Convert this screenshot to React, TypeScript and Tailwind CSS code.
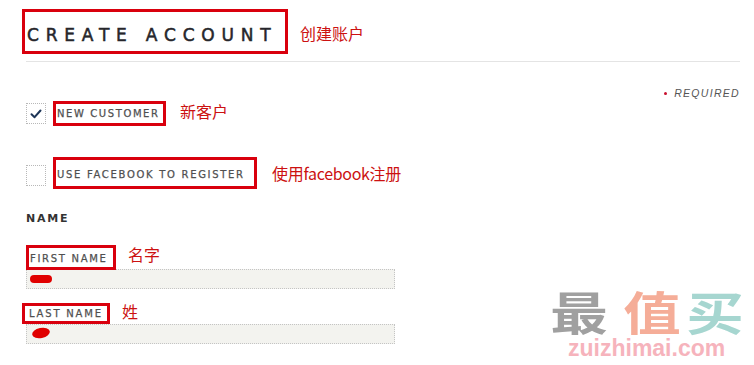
import React from "react";

const cjk = "font-['Noto_Sans_CJK_SC','Noto_Sans',sans-serif]";
const dj = "font-['DejaVu_Sans',Verdana,sans-serif]";

function Check({ checked }: { checked?: boolean }) {
  return (
    <div className="w-[20px] h-[21px] border border-dotted border-[#b8b8b8] flex items-center justify-center shrink-0">
      {checked && (
        <svg width="12" height="10" viewBox="0 0 12 10">
          <path d="M1.5 5.2 L4.6 8.2 L10.5 1.5" fill="none" stroke="#1d3557" strokeWidth="2" strokeLinecap="round" strokeLinejoin="round" />
        </svg>
      )}
    </div>
  );
}

export default function App() {
  return (
    <div className="relative w-[754px] h-[365px] bg-white overflow-hidden font-['Liberation_Sans',Arial,sans-serif]">
      {/* heading */}
      <div className="flex items-center pt-[9px] pl-[22px]">
        <div className="border-[3px] border-[#d9000d] w-[266px] h-[45px] pl-[2px] pt-[15px]">
          <h1 className={`${dj} text-[17px] leading-[17px] tracking-[6.8px] text-[#26262b] [-webkit-text-stroke:0.5px_#26262b] whitespace-nowrap`}>CREATE ACCOUNT</h1>
        </div>
        <span className={`${cjk} ml-[12px] mt-[2px] text-[16px] leading-[20px] text-[#cc1111]`}>创建账户</span>
      </div>
      <div className="ml-[26px] mr-[14px] mt-[7px] h-px bg-[#e4e4e4]" />

      {/* required */}
      <div className="flex justify-end items-center pr-[14px] mt-[26px] h-[10px]">
        <span className="w-[3px] h-[3px] rounded-full bg-[#c8102e] mr-[7px]" />
        <span className="text-[10.5px] leading-[10px] italic tracking-[1.3px] text-[#555]">REQUIRED</span>
      </div>

      {/* new customer */}
      <div className="flex items-center pl-[26px] mt-[3px]">
        <Check checked />
        <div className="ml-[7px] border-[3px] border-[#d9000d] w-[113px] h-[25px] pl-[1px] flex items-center">
          <span className={`${dj} text-[10px] leading-[10px] tracking-[1.6px] text-[#505050] [-webkit-text-stroke:0.25px_#505050] whitespace-nowrap`}>NEW CUSTOMER</span>
        </div>
        <span className={`${cjk} ml-[14px] -mt-[6px] text-[16px] leading-[20px] text-[#cc1111]`}>新客户</span>
      </div>

      {/* facebook */}
      <div className="flex items-center pl-[26px] mt-[31px]">
        <div className="mt-[4px]"><Check /></div>
        <div className="ml-[7px] border-[3px] border-[#d9000d] w-[204px] h-[32px] pl-[1px] pt-[4px] flex items-center">
          <span className={`${dj} text-[10px] leading-[10px] tracking-[1.7px] text-[#505050] [-webkit-text-stroke:0.25px_#505050] whitespace-nowrap`}>USE FACEBOOK TO REGISTER</span>
        </div>
        <span className={`${cjk} ml-[15px] text-[16px] leading-[20px] text-[#cc1111] tracking-[-0.3px]`}>使用facebook注册</span>
      </div>

      {/* name */}
      <div className={`${dj} pl-[26px] mt-[24px] text-[11px] leading-[12px] tracking-[1.8px] text-[#333] font-bold`}>NAME</div>

      <div className="flex items-center pl-[26px] mt-[20px]">
        <div className="border-[3px] border-[#d9000d] w-[90px] h-[25px] pl-[1px] pt-[3px] flex items-center">
          <span className={`${dj} text-[10px] leading-[10px] tracking-[1.7px] text-[#505050] [-webkit-text-stroke:0.25px_#505050] whitespace-nowrap`}>FIRST NAME</span>
        </div>
        <span className={`${cjk} ml-[12px] -mt-[8px] text-[16px] leading-[20px] text-[#cc1111]`}>名字</span>
      </div>
      <div className="ml-[26px] -mt-[1px] w-[369px] h-[20px] bg-[#f3f3ef] border border-dotted border-[#c4c4c4] flex items-center pl-[3px]">
        <div className="w-[22px] h-[8px] rounded-full bg-[#e00000]" />
      </div>

      <div className="flex items-center pl-[22px] mt-[14px]">
        <div className="border-[3px] border-[#d9000d] w-[88px] h-[21px] pl-[4px] flex items-center">
          <span className={`${dj} text-[10px] leading-[10px] tracking-[1.8px] text-[#505050] [-webkit-text-stroke:0.25px_#505050] whitespace-nowrap`}>LAST NAME</span>
        </div>
        <span className={`${cjk} ml-[12px] -mt-[6px] text-[16px] leading-[20px] text-[#cc1111]`}>姓</span>
      </div>
      <div className="ml-[26px] w-[369px] h-[20px] bg-[#f3f3ef] border border-dotted border-[#c4c4c4] flex items-start pl-[5px] pt-[3px]">
        <div className="w-[18px] h-[10px] rounded-[50%] bg-[#e00000] rotate-[-12deg]" />
      </div>

      {/* watermark */}
      <div className="absolute left-[556px] top-[290px] flex flex-col">
        <div className={`${cjk} flex text-[46px] leading-[40px] font-semibold`}>
          <span className="inline-block w-[46px] scale-x-125 text-[#a0a0a0]">最</span>
          <span className="inline-block w-[46px] ml-[27px] scale-x-125 text-[#f5ad98]">值</span>
          <span className="inline-block w-[46px] ml-[17px] scale-x-125 text-[#a6d6d0]">买</span>
        </div>
        <div className="ml-[12px] mt-[8px] text-[23px] leading-[20px] font-bold text-[#f6b3bc]">zuizhimai.com</div>
      </div>
    </div>
  );
}
